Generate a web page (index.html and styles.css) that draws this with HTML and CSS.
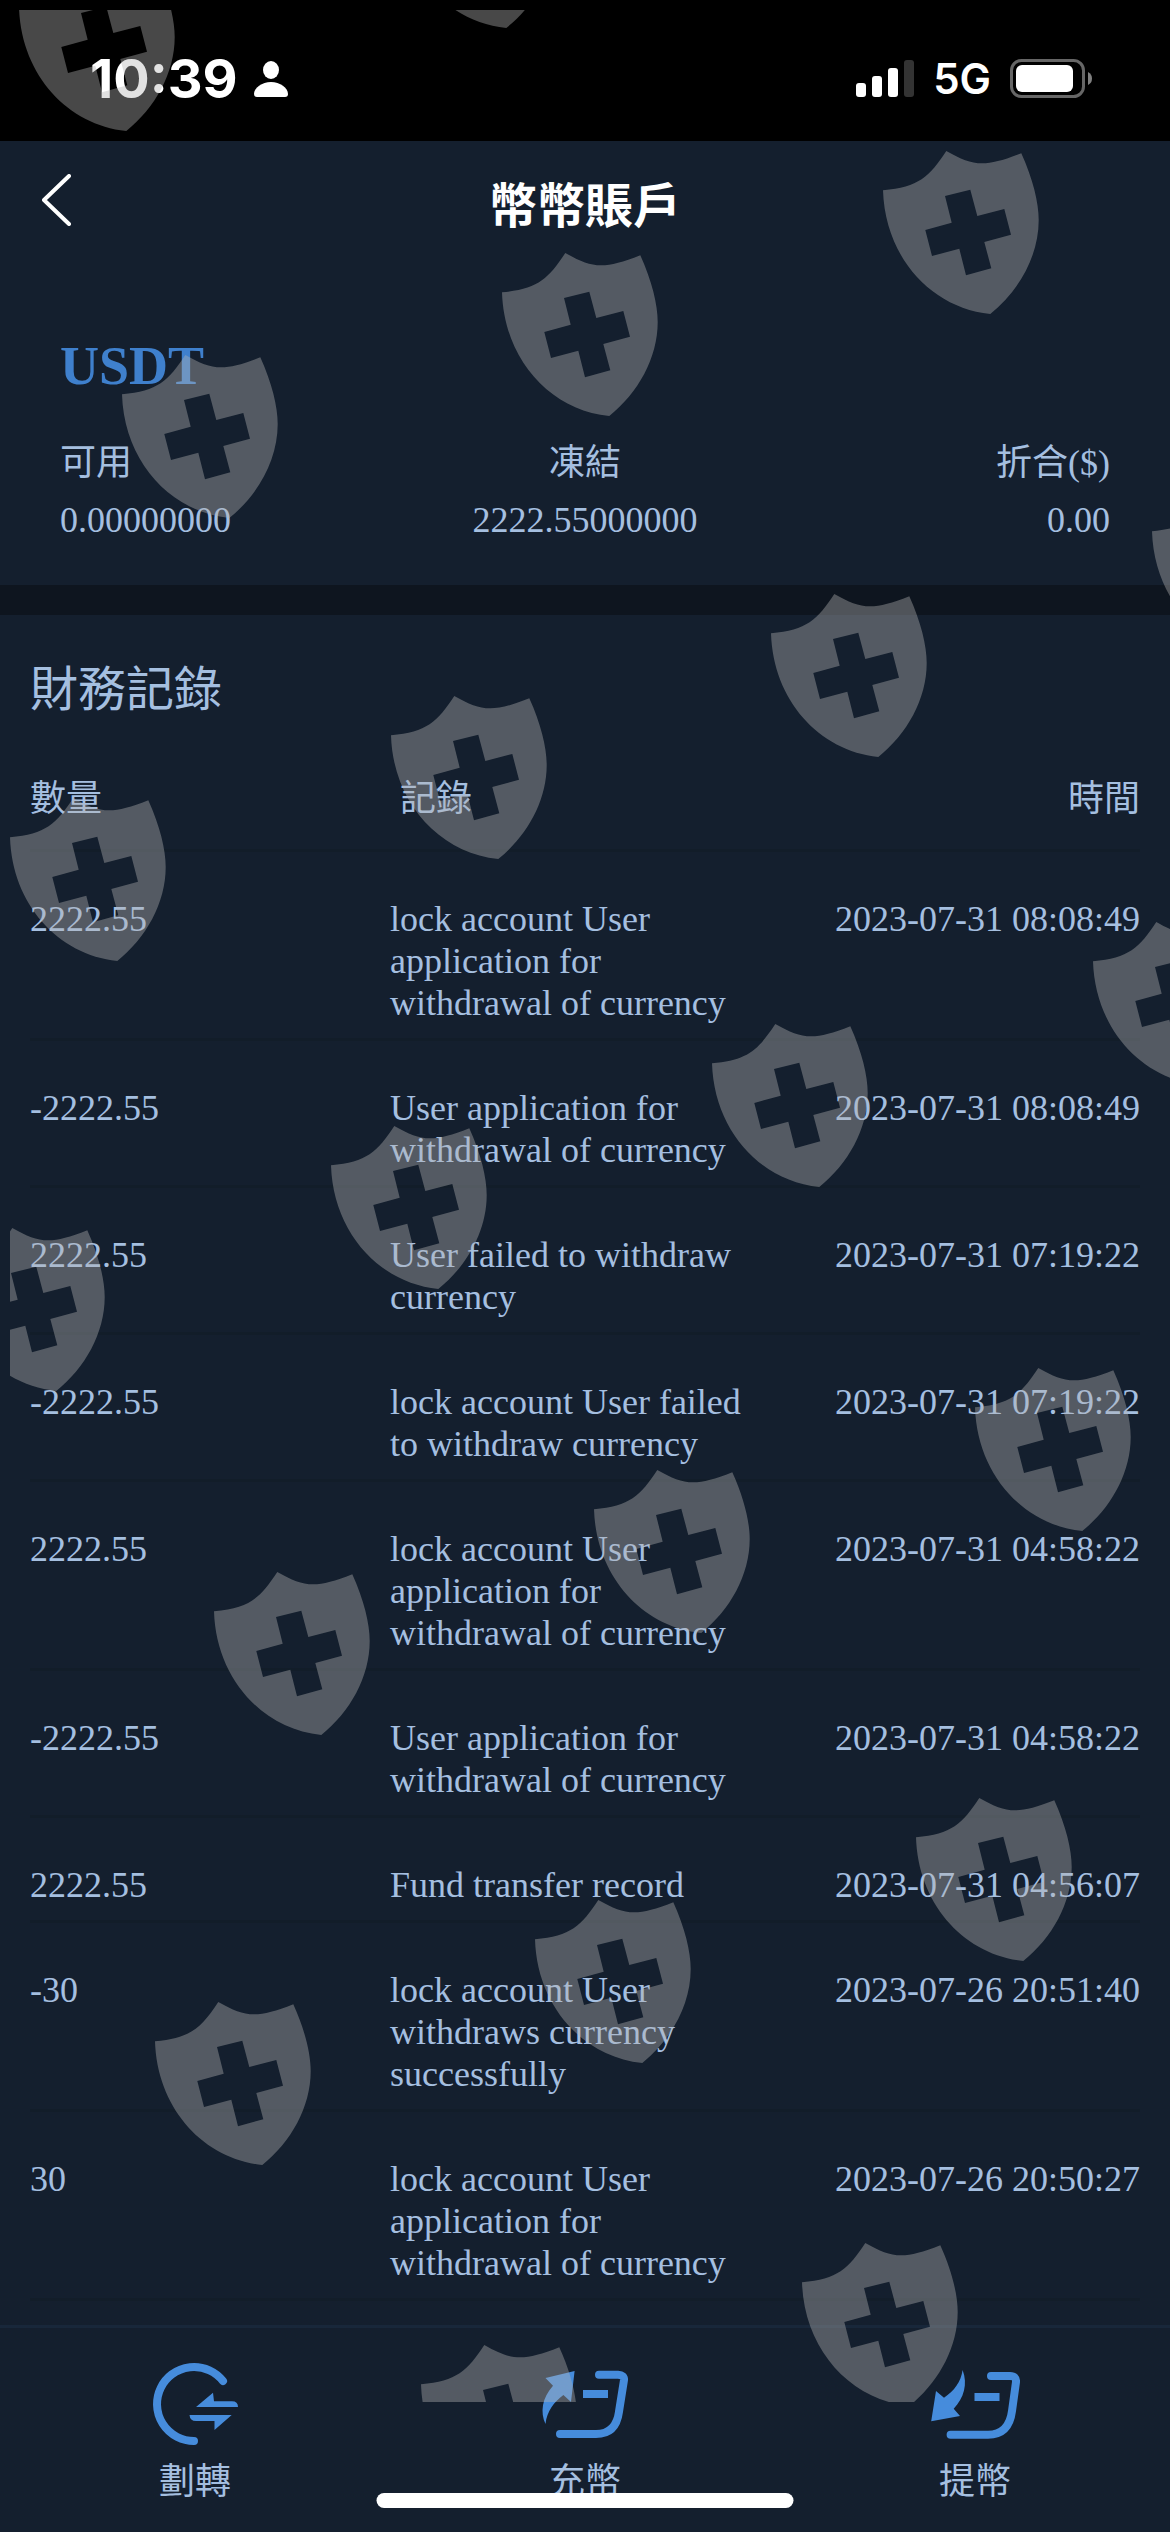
FILE: index.html
```html
<!DOCTYPE html>
<html lang="zh-Hant">
<head>
    <meta charset="UTF-8">
    <meta name="viewport" content="width=device-width, initial-scale=1.0">
    <title>幣幣賬戶</title>
    <link rel="stylesheet" href="styles.css">
</head>

<body>
    <div class="status-bar">
        <div class="status-left">
            <span class="clock">10:39</span>
            <svg class="person" width="34" height="36" viewBox="0 0 34 36">
                <ellipse cx="17" cy="9" rx="8" ry="9" />
                <path d="M17 21C26 21 34 27 34 33Q34 36 31 36H3Q0 36 0 33C0 27 8 21 17 21Z" />
            </svg>
        </div>
        <div class="status-right">
            <svg width="58" height="37" viewBox="0 0 58 37" fill="#fff">
                <rect x="0" y="23" width="10" height="14" rx="3" />
                <rect x="16" y="16" width="10" height="21" rx="3" />
                <rect x="32" y="8" width="10" height="29" rx="3" />
                <rect x="48" y="0" width="10" height="37" rx="3" fill="#333" />
            </svg>
            <span class="network">5G</span>
            <svg width="82" height="39" viewBox="0 0 82 39">
                <rect x="1.5" y="1.5" width="72" height="36" rx="10" fill="none" stroke="#666" stroke-width="3" />
                <rect x="6" y="6" width="57" height="27" rx="6" fill="#fff" />
                <path d="M78 13Q82 15 82 19.5Q82 24 78 26Z" fill="#808080" />
            </svg>
        </div>
    </div>

    <div class="header">
        <a class="back" href="#" aria-label="返回">
            <svg width="30" height="52" viewBox="0 0 30 52">
                <path d="M27 2L2 26L27 50" />
            </svg>
        </a>
        <h1 class="title">幣幣賬戶</h1>
    </div>

    <div class="account">
        <h2 class="coin">USDT</h2>
        <div class="balances">
            <div class="balance">
                <div>可用</div>
                <div>0.00000000</div>
            </div>
            <div class="balance">
                <div>凍結</div>
                <div>2222.55000000</div>
            </div>
            <div class="balance">
                <div>折合($)</div>
                <div>0.00</div>
            </div>
        </div>
    </div>

    <div class="records">
        <h2 class="records-title">財務記錄</h2>
        <table class="record-table">
            <thead>
                <tr>
                    <th class="amount">數量</th>
                    <th class="note">記錄</th>
                    <th class="time">時間</th>
                </tr>
            </thead>
            <tbody>
                <tr>
                    <td>2222.55</td>
                    <td>lock account User application for withdrawal of currency</td>
                    <td>2023-07-31 08:08:49</td>
                </tr>
                <tr>
                    <td>-2222.55</td>
                    <td>User application for withdrawal of currency</td>
                    <td>2023-07-31 08:08:49</td>
                </tr>
                <tr>
                    <td>2222.55</td>
                    <td>User failed to withdraw currency</td>
                    <td>2023-07-31 07:19:22</td>
                </tr>
                <tr>
                    <td>-2222.55</td>
                    <td>lock account User failed to withdraw currency</td>
                    <td>2023-07-31 07:19:22</td>
                </tr>
                <tr>
                    <td>2222.55</td>
                    <td>lock account User application for withdrawal of currency</td>
                    <td>2023-07-31 04:58:22</td>
                </tr>
                <tr>
                    <td>-2222.55</td>
                    <td>User application for withdrawal of currency</td>
                    <td>2023-07-31 04:58:22</td>
                </tr>
                <tr>
                    <td>2222.55</td>
                    <td>Fund transfer record</td>
                    <td>2023-07-31 04:56:07</td>
                </tr>
                <tr>
                    <td>-30</td>
                    <td>lock account User withdraws currency successfully</td>
                    <td>2023-07-26 20:51:40</td>
                </tr>
                <tr>
                    <td>30</td>
                    <td>lock account User application for withdrawal of currency</td>
                    <td>2023-07-26 20:50:27</td>
                </tr>
            </tbody>
        </table>
    </div>

    <div class="tab-bar">
        <a class="tab" href="#">
            <svg width="90" height="90" viewBox="0 0 90 90">
                <path class="line" d="M73 21A37 37 0 1 0 44 81" />
                <path class="solid" d="M63 32.7L46 47H88Q88 41.3 82 41.3H64Z" />
                <path class="solid" d="M39.5 55H81.7L64.5 70V61H46Q40 61 39.5 55Z" />
            </svg>
            <span>劃轉</span>
        </a>
        <a class="tab" href="#">
            <svg width="90" height="90" viewBox="0 0 90 90">
                <path class="solid" d="M34.6 11L5.5 18L13 25.7C2 38 0 52 5.5 64C7 51 14 42 23.4 35L31 42Z" />
                <path class="line" d="M59 14.7H78Q84.5 15 84 20L79 51.7Q76 74 56 74H20" />
                <path class="solid" d="M43 30h25v8H43z" />
            </svg>
            <span>充幣</span>
        </a>
        <a class="tab" href="#">
            <svg width="90" height="90" viewBox="0 0 90 90">
                <path class="solid" d="M1.2 61.3L6 31L14 37.7C24 31 31 22 32.6 10C38 24 34 38 23.7 48.7L30 56Z" />
                <path class="line" d="M61 16H80Q86.5 16 86 22L82 51Q79 74.7 58 74.7H20.6" />
                <path class="solid" d="M44.5 33h25v8h-25z" />
            </svg>
            <span>提幣</span>
        </a>
    </div>
    <div class="home-indicator"></div>

    <!-- 盾牌水印 -->
    <div class="watermark">
        <svg width="1170" height="2532" viewBox="10 10 1170 2532" aria-hidden="true">
            <defs>
                <path id="shield" fill-rule="evenodd" d="M0 39.3C36 36 46 26 63.3 0C90 15 101 17 138.3 2.3C150 28 155.7 52 155.7 69C155.7 105 136 140 107.3 163C48 157 2 106 0 39.3ZM62 45L68.7 71.7L42.3 79L49 105L76.3 97.7L83 124.3L108.3 117.3L101.3 91L128 83.7L121.3 58L94.3 65L87.3 38.7Z" />
            </defs>
            <use href="#shield" x="19" y="-32" />
            <use href="#shield" x="399" y="-135" />
            <use href="#shield" x="883" y="151" />
            <use href="#shield" x="502" y="253" />
            <use href="#shield" x="122" y="355" />
            <use href="#shield" x="1152" y="492" />
            <use href="#shield" x="771" y="594" />
            <use href="#shield" x="391" y="696" />
            <use href="#shield" x="10" y="798" />
            <use href="#shield" x="1093" y="922" />
            <use href="#shield" x="712" y="1024" />
            <use href="#shield" x="331" y="1126" />
            <use href="#shield" x="-51" y="1228" />
            <use href="#shield" x="975" y="1368" />
            <use href="#shield" x="594" y="1470" />
            <use href="#shield" x="214" y="1572" />
            <use href="#shield" x="916" y="1798" />
            <use href="#shield" x="535" y="1900" />
            <use href="#shield" x="155" y="2002" />
            <use href="#shield" x="802" y="2243" />
            <use href="#shield" x="421" y="2345" />
        </svg>
    </div>
</body>
</html>
```
FILE: styles.css
```css
* {
    box-sizing: border-box;
}

body {
    position: relative;
    display: flex;
    flex-direction: column;
    margin: 0;
    min-height: 100vh;
    font-family: "Liberation Serif", "Noto Sans CJK TC", serif;
    font-size: 36px;
    line-height: 42px;
    color: #a5bfe0;
    background-color: #141f2e;
}

svg {
    display: block;
}

a {
    color: inherit;
    text-decoration: none;
}

.status-bar {
    display: flex;
    justify-content: space-between;
    align-items: center;
    height: 141px;
    padding: 16px 78px 0 90px;
    font-family: Inter, sans-serif;
    color: #fff;
    background-color: #000;
}

.status-left {
    display: flex;
    align-items: center;
    gap: 16px;
}

.clock {
    font-size: 54px;
    font-weight: 700;
}

.person {
    fill: #fff;
}

.status-right {
    display: flex;
    align-items: center;
    gap: 19px;
}

.network {
    font-size: 42px;
    font-weight: 600;
}

.header {
    display: grid;
    grid-template-columns: 120px 1fr 120px;
    align-items: center;
    height: 132px;
}

.back {
    padding-left: 42px;
    padding-bottom: 14px;
}

.back path {
    fill: none;
    stroke: #fff;
    stroke-width: 4;
    stroke-linecap: round;
    stroke-linejoin: round;
}

.title {
    margin: 0;
    font-size: 48px;
    font-weight: 700;
    text-align: center;
    color: #fff;
}

.account {
    padding: 62px 60px 36px;
    border-bottom: 30px solid #0e151f;
}

.coin {
    margin: 0;
    font-size: 54px;
    line-height: 62px;
    color: #3f80cd;
}

.balances {
    display: grid;
    grid-template-columns: repeat(3, 1fr);
    margin-top: 38px;
}

.balance {
    line-height: 57px;
}

.balance:nth-child(2) {
    text-align: center;
}

.balance:nth-child(3) {
    text-align: right;
}

.records {
    padding: 44px 30px 24px;
}

.records-title {
    margin: 0;
    font-size: 48px;
    font-weight: 400;
    line-height: 62px;
}

.record-table {
    width: 100%;
    table-layout: fixed;
    border-collapse: separate;
    border-spacing: 0;
}

.record-table th {
    padding: 57px 0 29px;
    font-weight: 400;
    text-align: left;
    border-bottom: 3px solid #121d29;
}

.record-table td {
    padding: 46px 0 14px;
    vertical-align: top;
    border-bottom: 3px solid #121d29;
}

.record-table .amount {
    width: 360px;
}

.record-table .note {
    width: 34%;
    padding-left: 10px;
}

.record-table .time,
.record-table td:last-child {
    text-align: right;
}

.tab-bar {
    display: grid;
    grid-template-columns: repeat(3, 1fr);
    height: 207px;
    margin-top: auto;
    padding-top: 32px;
    border-top: 3px solid #18273a;
}

.tab {
    display: flex;
    flex-direction: column;
    align-items: center;
    gap: 11px;
}

.tab .line {
    fill: none;
    stroke: #468cdc;
    stroke-width: 8;
    stroke-linecap: round;
}

.tab .solid {
    fill: #468cdc;
}

.home-indicator {
    position: absolute;
    left: 50%;
    bottom: 24px;
    width: 417px;
    height: 15px;
    border-radius: 8px;
    background-color: #fff;
    transform: translateX(-50%);
}

.watermark {
    position: absolute;
    top: 10px;
    right: 0;
    bottom: 130px;
    left: 10px;
    overflow: hidden;
    pointer-events: none;
}

.watermark svg {
    fill: rgba(180, 180, 180, 0.4);
}
```
